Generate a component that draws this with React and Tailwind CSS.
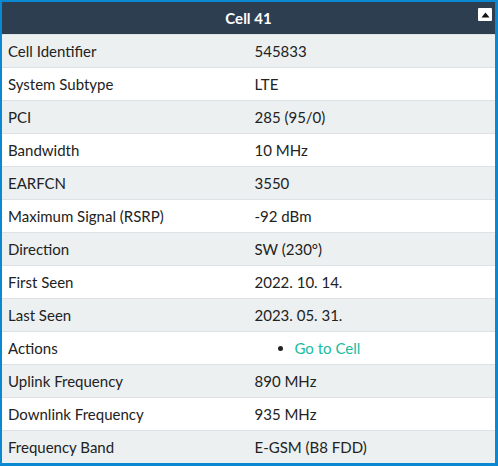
export default function App() {
  const rows = [
    ["Cell Identifier", "545833"],
    ["System Subtype", "LTE"],
    ["PCI", "285 (95/0)"],
    ["Bandwidth", "10 MHz"],
    ["EARFCN", "3550"],
    ["Maximum Signal (RSRP)", "-92 dBm"],
    ["Direction", "SW (230°)"],
    ["First Seen", "2022. 10. 14."],
    ["Last Seen", "2023. 05. 31."],
    ["Actions", null],
    ["Uplink Frequency", "890 MHz"],
    ["Downlink Frequency", "935 MHz"],
    ["Frequency Band", "E-GSM (B8 FDD)"],
  ];
  return (
    <div
      className="w-[498px] h-[466px] border-t-2 border-l-2 border-r-[3px] border-b-[3px] border-[#0a88d2] bg-white text-[15px] text-[#222] overflow-hidden"
      style={{ fontFamily: "Lato, 'Open Sans', sans-serif" }}
    >
      <div className="relative h-8 bg-[#2c3e50] flex items-center justify-center text-white font-bold text-[15px]">
        <span>Cell 41</span>
        <div className="absolute right-[3px] top-[6px] w-[14px] h-[13px] bg-white rounded-[1px] flex items-center justify-center">
          <svg width="9" height="6" viewBox="0 0 9 6">
            <polygon points="4.5,0.5 8.5,5.5 0.5,5.5" fill="#111" />
          </svg>
        </div>
      </div>
      {rows.map(([k, v], i) => (
        <div
          key={k}
          className={`grid grid-cols-2 h-[33px] border-t border-[#dce2e5] ${i % 2 === 0 ? "bg-[#ecf0f1]" : "bg-white"}`}
        >
          <div className="px-[6px] flex items-center">{k}</div>
          <div className="px-[6px] flex items-center">
            {v === null ? (
              <ul className="list-disc pl-10 marker:text-[#222]">
                <li className="text-[#18bc9c]">
                  <span className="text-[#18bc9c]">Go to Cell</span>
                </li>
              </ul>
            ) : (
              v
            )}
          </div>
        </div>
      ))}
    </div>
  );
}
